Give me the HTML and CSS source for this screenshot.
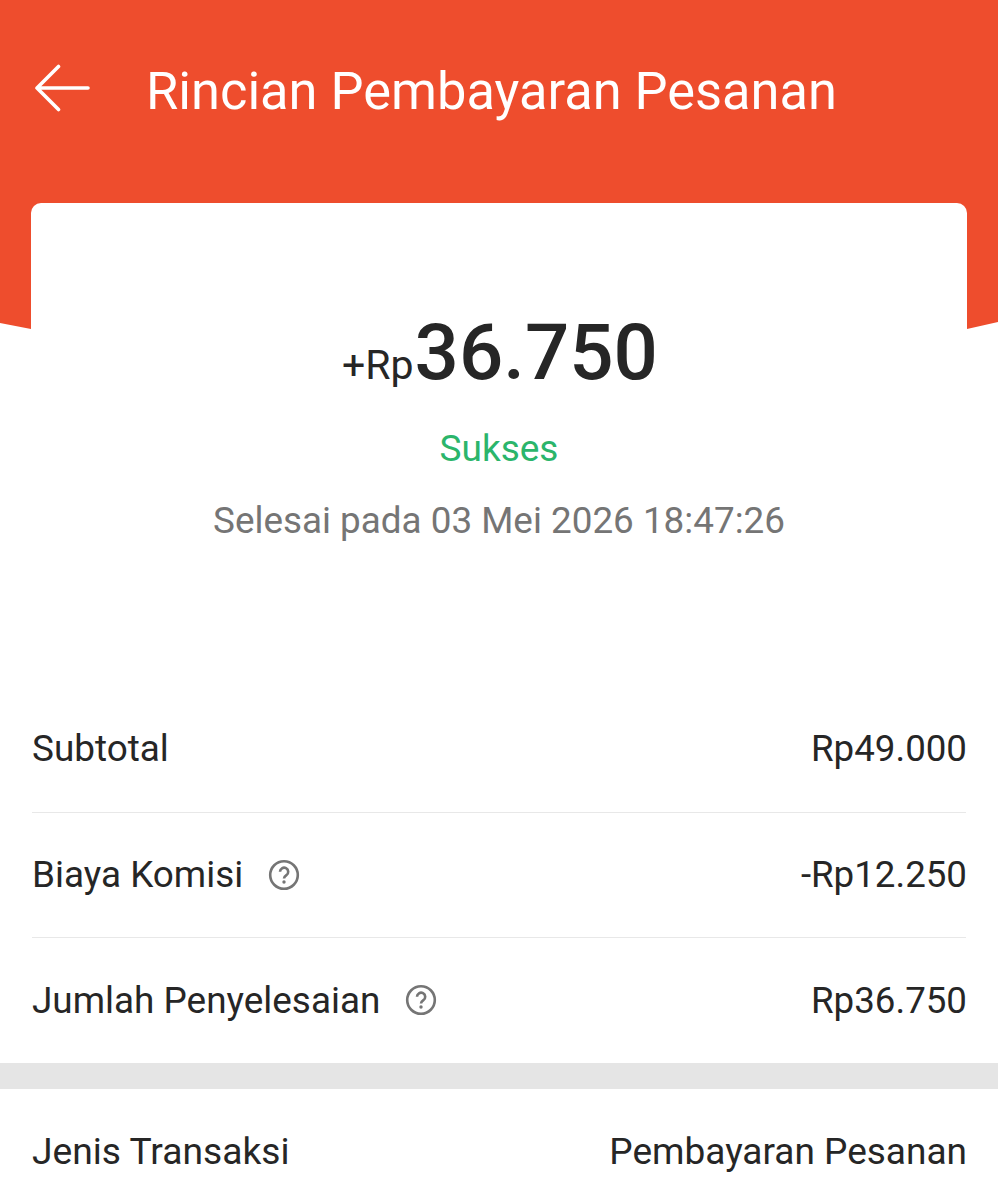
FILE: index.html
```html
<!DOCTYPE html>
<html lang="id">
<head>
<meta charset="utf-8">
<title>Rincian Pembayaran Pesanan</title>
<link rel="stylesheet" href="styles.css">
</head>
<body>
<div class="page">
  <div class="hero-bg"></div>
  <header class="topbar">
    <svg class="back" width="56" height="48" viewBox="0 0 56 48" fill="none" stroke="#fff" stroke-width="3.6" stroke-linecap="round" stroke-linejoin="round"><path d="M53 24H2M23.5 2.5 2 24l21.500 21.500"/></svg>
    <h1 class="title">Rincian Pembayaran Pesanan</h1>
  </header>
  <section class="card">
    <div class="amount"><span class="amount-prefix">+Rp</span><span class="amount-value">36.750</span></div>
    <div class="status">Sukses</div>
    <div class="date">Selesai pada 03 Mei 2026 18:47:26</div>
  </section>
  <section class="list">
    <div class="row"><span class="label">Subtotal</span><span class="value">Rp49.000</span></div>
    <div class="row"><span class="label">Biaya Komisi<svg class="help" width="32" height="32" viewBox="0 0 32 32" fill="none"><circle cx="16" cy="16" r="13.8" stroke="#757575" stroke-width="2.6"/><path d="M12 12.800a4.100 4.100 0 1 1 6.400 3.400c-1.500 1-2.400 1.800-2.400 3.400" stroke="#757575" stroke-width="2.600"/><circle cx="16" cy="23" r="1.700" fill="#757575"/></svg></span><span class="value">-Rp12.250</span></div>
    <div class="row"><span class="label">Jumlah Penyelesaian<svg class="help" width="32" height="32" viewBox="0 0 32 32" fill="none"><circle cx="16" cy="16" r="13.8" stroke="#757575" stroke-width="2.6"/><path d="M12 12.800a4.100 4.100 0 1 1 6.400 3.400c-1.500 1-2.400 1.800-2.400 3.400" stroke="#757575" stroke-width="2.600"/><circle cx="16" cy="23" r="1.700" fill="#757575"/></svg></span><span class="value">Rp36.750</span></div>
  </section>
  <div class="divider"></div>
  <section class="list">
    <div class="row"><span class="label label-wide">Jenis Transaksi</span><span class="value value-text">Pembayaran Pesanan</span></div>
  </section>
</div>
</body>
</html>
```
FILE: styles.css
```css
html, body {
  margin: 0;
  padding: 0;
  background: #fff;
}
.page {
  position: relative;
  width: 998px;
  height: 1200px;
  overflow: hidden;
  font-family: Roboto, "Liberation Sans", sans-serif;
  color: #262626;
}
.hero-bg {
  position: absolute;
  top: 0;
  left: 0;
  width: 998px;
  height: 330px;
  background: #ee4d2d;
  clip-path: polygon(0 0, 998px 0, 998px 322px, 967px 329px, 31px 329px, 0 323px);
}
.topbar {
  position: relative;
  height: 203px;
  box-sizing: border-box;
  padding: 64px 0 0 35px;
  display: flex;
  align-items: flex-start;
}
.back {
  flex: none;
}
.title {
  margin: -1px 0 0 55px;
  font-size: 52.4px;
  line-height: 56px;
  font-weight: 400;
  color: #fff;
  white-space: nowrap;
}
.card {
  position: relative;
  margin: 0 31px;
  height: 483px;
  background: #fff;
  border-radius: 10px 10px 0 0;
  display: flex;
  flex-direction: column;
  align-items: center;
}
.amount {
  margin-top: 108px;
  padding-left: 2px;
  display: flex;
  align-items: baseline;
  height: 84px;
  line-height: 84px;
}
.amount-prefix {
  font-size: 41px;
  margin-right: 1px;
  color: #262626;
}
.amount-value {
  font-size: 78px;
  font-weight: 500;
  color: #262626;
}
.status {
  margin-top: 32px;
  font-size: 37px;
  line-height: 44px;
  color: #2bb56b;
}
.date {
  margin-top: 28px;
  font-size: 36.85px;
  line-height: 44px;
  color: #757575;
}
.list {
  position: relative;
  padding: 0 32px;
}
.row {
  height: 125.5px;
  box-sizing: border-box;
  display: flex;
  justify-content: space-between;
  align-items: center;
  border-top: 1px solid #e8e8e8;
  font-size: 36.9px;
  color: #262626;
}
.row:first-child {
  border-top: 0;
}
.label {
  display: flex;
  align-items: center;
}
.label-wide {
  font-size: 37.2px;
}
.value {
  font-size: 36.7px;
  margin-right: -1px;
}
.value-text {
  font-size: 37px;
}
.help {
  margin-left: 25px;
}
.divider {
  position: relative;
  height: 26px;
  background: #e5e5e5;
}
```
